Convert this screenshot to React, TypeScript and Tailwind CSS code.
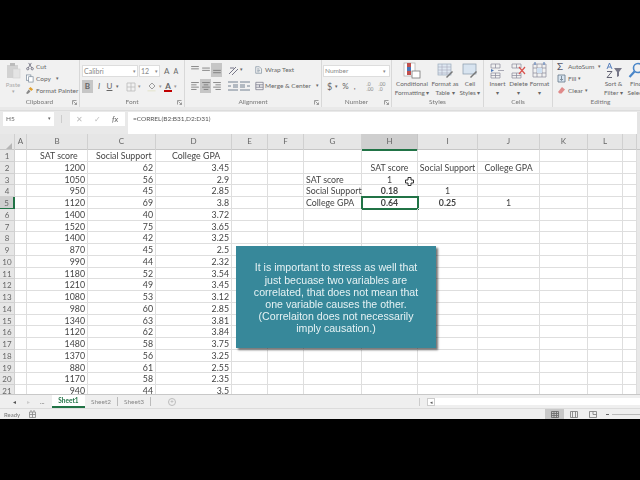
import type { ReactNode } from "react";

const rows = [
  ["SAT score", "Social Support", "College GPA"],
  ["1200", "62", "3.45"],
  ["1050", "56", "2.9"],
  ["950", "45", "2.85"],
  ["1120", "69", "3.8"],
  ["1400", "40", "3.72"],
  ["1520", "75", "3.65"],
  ["1400", "42", "3.25"],
  ["870", "45", "2.5"],
  ["990", "44", "2.32"],
  ["1180", "52", "3.54"],
  ["1210", "49", "3.45"],
  ["1080", "53", "3.12"],
  ["980", "60", "2.85"],
  ["1340", "63", "3.81"],
  ["1120", "62", "3.84"],
  ["1480", "58", "3.75"],
  ["1370", "56", "3.25"],
  ["880", "61", "2.55"],
  ["1170", "58", "2.35"],
  ["940", "44", "3.5"],
];

const columns = ["A", "B", "C", "D", "E", "F", "G", "H", "I", "J", "K", "L", ""];

// second table, keyed by row index then column letter
const corr: Record<number, Record<string, string>> = {
  1: { H: "SAT score", I: "Social Support", J: "College GPA" },
  2: { G: "SAT score", H: "1" },
  3: { G: "Social Support", H: "0.18", I: "1" },
  4: { G: "College GPA", H: "0.64", I: "0.25", J: "1" },
};

const Lines = ({ kind }: { kind: "left" | "center" | "right" | "top" | "middle" | "bottom" }) => {
  const d = {
    left: "M1 2h10M1 5h7M1 8h10M1 11h7",
    center: "M1 2h10M3 5h6M1 8h10M3 11h6",
    right: "M1 2h10M4 5h7M1 8h10M4 11h7",
    top: "M1 2h10M1 5h10",
    middle: "M1 4h10M1 7h10",
    bottom: "M1 7h10M1 10h10",
  }[kind];
  return (
    <svg width="10" height="10" viewBox="0 0 12 13" fill="none" stroke="#777" strokeWidth="1.1">
      <path d={d} />
    </svg>
  );
};

const Group = ({ width, label, launcher, children }: { width: string; label: string; launcher?: boolean; children: ReactNode }) => {
  return (
    <div className={`${width} shrink-0 h-full flex flex-col border-r border-[#d8d8d8]`}>
      <div className="flex-1 min-h-0">{children}</div>
      <div className="h-[10px] relative text-center text-[6.5px] leading-[10px] text-[#777]">
        {label}
        {launcher && (
          <svg className="absolute right-[2px] top-[3px]" width="5" height="5" viewBox="0 0 5 5" fill="none" stroke="#888" strokeWidth="0.8">
            <path d="M0.5 4.5v-4h4M1.5 1.5l3 3M4.5 2.5v2h-2" />
          </svg>
        )}
      </div>
    </div>
  );
};

const BigButton = ({ width, lines, children }: { width: string; lines: string[]; children: ReactNode }) => {
  return (
    <div className={`${width} shrink-0 flex flex-col items-center`}>
      <div className="h-[17px] flex items-center justify-center">{children}</div>
      <div className="text-center text-[6.3px] leading-[9px] text-[#666] whitespace-nowrap">
        {lines.map((l) => (
          <div key={l}>{l}</div>
        ))}
      </div>
    </div>
  );
};

const Ribbon = () => {
  return (
    <div className="h-[47px] flex bg-[#f1f1f1] font-['Lato',sans-serif] overflow-hidden">
      <Group width="w-[80px]" label="Clipboard" launcher>
        <div className="flex h-full pt-[2px]">
          <div className="w-[26px] flex flex-col items-center">
            <svg width="15" height="17" viewBox="0 0 15 17">
              <rect x="1" y="3" width="11" height="13" fill="#d2d2d2" />
              <rect x="4" y="1" width="5" height="3" fill="#bbb" />
              <rect x="7" y="7" width="7" height="9" fill="#e4e4e4" stroke="#ccc" strokeWidth="0.5" />
            </svg>
            <span className="text-[6px] leading-[7px] text-[#aaa] mt-[2px]">Paste</span>
            <span className="text-[5px] leading-[7px] text-[#aaa]">▾</span>
          </div>
          <div className="flex flex-col gap-[3px] text-[6.5px] leading-[9px] text-[#666] whitespace-nowrap">
            <div className="flex items-center gap-[2px]">
              <svg width="8" height="9" viewBox="0 0 9 9" fill="none" stroke="#667" strokeWidth="0.9">
                <circle cx="2" cy="7" r="1.3" />
                <circle cx="7" cy="7" r="1.3" />
                <path d="M2.6 6L6 0.5M6.4 6L3 0.5" />
              </svg>
              Cut
            </div>
            <div className="flex items-center gap-[2px]">
              <svg width="8" height="9" viewBox="0 0 9 9" fill="#fff" stroke="#7a8a9a" strokeWidth="0.8">
                <rect x="0.5" y="0.5" width="5" height="6" />
                <rect x="3" y="2.5" width="5" height="6" />
              </svg>
              Copy <span className="ml-[3px] text-[5px]">▾</span>
            </div>
            <div className="flex items-center gap-[2px]">
              <svg width="8" height="9" viewBox="0 0 9 9">
                <path d="M5 0.5l3 2.5-2 2-3-2.5z" fill="#e0a030" />
                <path d="M3 3.5l2 2-3 3-2-1z" fill="#888" />
              </svg>
              <span>Format Painter</span>
            </div>
          </div>
        </div>
      </Group>

      <Group width="w-[105px]" label="Font" launcher>
        <div className="pt-[5px] pl-[2px] flex flex-col gap-[3px] text-[#666]">
          <div className="flex items-center gap-[1px] text-[7px]">
            <div className="w-[56px] h-[12px] bg-white border border-[#ddd] px-[1px] leading-[10px] flex justify-between text-[#888]">
              Calibri<span className="text-[5px]">▾</span>
            </div>
            <div className="w-[21px] h-[12px] bg-white border border-[#ddd] px-[1px] leading-[10px] flex justify-between text-[#888]">
              12<span className="text-[5px]">▾</span>
            </div>
            <span className="ml-[3px] text-[8px]">A</span>
            <span className="ml-[3px] text-[7px]">A</span>
          </div>
          <div className="flex items-center text-[8px] leading-[13px]">
            <span className="w-[11px] h-[13px] bg-[#c6c6c6] text-center font-bold">B</span>
            <span className="ml-[2px] w-[8px] text-center italic">I</span>
            <span className="ml-[3px] w-[7px] text-center underline">U</span>
            <span className="ml-[3px] text-[5px]">▾</span>
            <svg width="10" height="10" viewBox="0 0 10 10" fill="none" stroke="#bbb" strokeWidth="0.8" className="ml-[7px]">
              <path d="M1 1h8v8H1zM5 1v8M1 5h8" />
            </svg>
            <span className="ml-[2px] text-[5px] text-[#999]">▾</span>
            <svg width="10" height="11" viewBox="0 0 10 11" className="ml-[6px]">
              <path d="M2 5l3-3 3 3-3 3z" fill="none" stroke="#888" strokeWidth="0.8" />
              <rect x="0.5" y="9" width="8" height="1.5" fill="#e8e8d8" />
            </svg>
            <span className="ml-[2px] text-[5px] text-[#999]">▾</span>
            <div className="flex flex-col items-center w-[8px] ml-[2px]">
              <span className="text-[8px] leading-[8px] font-bold">A</span>
              <span className="w-[8px] h-[2px] bg-[#c00000]" />
            </div>
            <span className="ml-[2px] text-[5px] text-[#999]">▾</span>
          </div>
        </div>
      </Group>

      <Group width="w-[137px]" label="Alignment" launcher>
        <div className="pt-[3px] pl-[4px] flex flex-col gap-[2px] text-[6.5px] text-[#666] whitespace-nowrap">
          <div className="flex items-center h-[14px]">
            <span className="w-[11px] h-[14px] flex items-center justify-center"><Lines kind="top" /></span>
            <span className="w-[11px] h-[14px] flex items-center justify-center"><Lines kind="middle" /></span>
            <span className="w-[11px] h-[14px] flex items-center justify-center bg-[#c6c6c6]"><Lines kind="bottom" /></span>
            <svg width="11" height="11" viewBox="0 0 11 11" fill="none" stroke="#778" strokeWidth="1" className="ml-[6px]">
              <path d="M1 9L8 2M4 10l6-6M2 3h4" />
            </svg>
            <span className="text-[5px] ml-[1px] w-[3px]">▾</span>
            <svg width="8" height="10" viewBox="0 0 11 11" fill="none" stroke="#789" strokeWidth="0.9" className="ml-[12px] mr-[2px]">
              <path d="M1 1h5l3 3v6H1zM3 4h3M3 6h4M3 8h3" />
            </svg>
            Wrap Text
          </div>
          <div className="flex items-center h-[14px]">
            <span className="w-[11px] flex justify-center"><Lines kind="left" /></span>
            <span className="w-[11px] h-[14px] flex items-center justify-center bg-[#c6c6c6]"><Lines kind="center" /></span>
            <span className="w-[11px] flex justify-center"><Lines kind="right" /></span>
            <svg width="10" height="10" viewBox="0 0 10 10" fill="none" stroke="#678" strokeWidth="0.9" className="ml-[6px]">
              <path d="M0 1h10M5 4h5M5 6h5M0 9h10M0 5h3" />
            </svg>
            <svg width="10" height="10" viewBox="0 0 10 10" fill="none" stroke="#678" strokeWidth="0.9" className="ml-[2px]">
              <path d="M0 1h10M0 4h5M0 6h5M0 9h10M7 5h3" />
            </svg>
            <svg width="9" height="10" viewBox="0 0 11 11" fill="none" stroke="#778" strokeWidth="0.9" className="ml-[5px] mr-[1px]">
              <path d="M1 1h9v9H1zM1 4h9M1 7h9M5.5 4v3" />
            </svg>
            Merge &amp; Center
            <span className="text-[5px] ml-[5px]">▾</span>
          </div>
        </div>
      </Group>

      <Group width="w-[70px]" label="Number" launcher>
        <div className="pt-[5px] pl-[1px] flex flex-col gap-[3px] text-[#666]">
          <div className="w-[67px] h-[12px] bg-white border border-[#ddd] px-[1px] leading-[10px] flex justify-between text-[6.5px] text-[#888]">
            Number<span className="text-[5px] mr-[2px]">▾</span>
          </div>
          <div className="flex items-center text-[9px] leading-[13px] pl-[4px]">
            $<span className="text-[5px] ml-[3px]">▾</span>
            <span className="ml-[4px] text-[8px]">%</span>
            <span className="ml-[5px] text-[8px]">,</span>
            <span className="ml-[11px] text-[5px] leading-[5px] w-[9px] text-[#888]">.0<br />.00</span>
            <span className="ml-[3px] text-[5px] leading-[5px] w-[9px] text-[#888]">.00<br />.0</span>
          </div>
        </div>
      </Group>

      <Group width="w-[92px]" label="Styles">
        <div className="flex pt-[2px] h-full">
          <BigButton width="w-[40px]" lines={["Conditional", "Formatting ▾"]}>
            <svg width="18" height="17" viewBox="0 0 18 17">
              <rect x="1" y="1" width="11" height="13" fill="#fff" stroke="#aaa" strokeWidth="0.7" />
              <rect x="4" y="1" width="4" height="4" fill="#c0504d" />
              <rect x="4" y="5" width="4" height="4" fill="#4a76b8" />
              <rect x="4" y="9" width="4" height="4" fill="#c0504d" />
              <rect x="9" y="9" width="8" height="7" fill="#fff" stroke="#777" strokeWidth="0.8" />
            </svg>
          </BigButton>
          <BigButton width="w-[26px]" lines={["Format as", "Table ▾"]}>
            <svg width="17" height="16" viewBox="0 0 17 16">
              <rect x="1" y="1" width="13" height="11" fill="#dfe8f2" stroke="#9ab" strokeWidth="0.7" />
              <path d="M1 4h13M1 7h13M1 10h13M5 1v11M10 1v11" stroke="#aab" strokeWidth="0.6" />
              <path d="M9 14l6-6 1 1-6 6z" fill="#777" />
            </svg>
          </BigButton>
          <BigButton width="w-[24px]" lines={["Cell", "Styles ▾"]}>
            <svg width="16" height="16" viewBox="0 0 16 16">
              <rect x="1" y="1" width="13" height="10" fill="#d8e4f0" stroke="#89a" strokeWidth="0.7" />
              <path d="M8 14l6-6 1 1-6 6z" fill="#777" />
            </svg>
          </BigButton>
        </div>
      </Group>

      <Group width="w-[69px]" label="Cells">
        <div className="flex pt-[2px] pl-[3px] h-full">
          <BigButton width="w-[21px]" lines={["Insert", "▾"]}>
            <svg width="15" height="16" viewBox="0 0 15 16" fill="none" stroke="#889" strokeWidth="0.7">
              <path d="M1 1h9v4H1zM1 10h9v5H1zM5.5 1v4M5.5 10v5M1 12.5h9M8 7.5h6" />
              <path d="M1 6l3 1.5-3 1.5z" fill="#4a76b8" stroke="none" />
            </svg>
          </BigButton>
          <BigButton width="w-[21px]" lines={["Delete", "▾"]}>
            <svg width="16" height="16" viewBox="0 0 16 16" fill="none" stroke="#889" strokeWidth="0.7">
              <path d="M1 1h9v4H1zM1 10h9v5H1zM5.5 1v4M5.5 10v5M1 12.5h9" />
              <path d="M8 4l6 7M14 4l-6 7" stroke="#d9534f" strokeWidth="1.2" />
            </svg>
          </BigButton>
          <BigButton width="w-[21px]" lines={["Format", "▾"]}>
            <svg width="15" height="17" viewBox="0 0 15 17" fill="none" stroke="#889" strokeWidth="0.7">
              <path d="M1 2h13v13H1zM5 2v13M10 2v13M1 6h13M1 11h13" />
              <path d="M3 0v3M12 0v3" stroke="#4a76b8" strokeWidth="1" />
              <rect x="5" y="6" width="5" height="5" fill="#cfe0f2" stroke="none" />
            </svg>
          </BigButton>
        </div>
      </Group>

      <div className="flex-1 h-full flex flex-col min-w-0">
        <div className="flex-1 min-h-0 flex pt-[2px]">
          <div className="w-[50px] shrink-0 pl-[4px] flex flex-col gap-[3px] text-[6.5px] leading-[9px] text-[#666] whitespace-nowrap">
            <div className="flex items-center gap-[2px]"><span className="w-[9px] text-[10px] leading-[9px] text-[#556]">Σ</span>AutoSum<span className="text-[5px] ml-[2px]">▾</span></div>
            <div className="flex items-center gap-[2px]">
              <svg width="9" height="9" viewBox="0 0 9 9" fill="#d8e4f0" stroke="#678" strokeWidth="0.8">
                <path d="M1 1h7v7H1zM4.5 2v4M3 5l1.5 1.5L6 5" />
              </svg>
              Fill<span className="text-[5px]">▾</span>
            </div>
            <div className="flex items-center gap-[2px]">
              <svg width="9" height="9" viewBox="0 0 9 9">
                <path d="M1 6l4-5 3 2.5-3.5 4H2.5z" fill="#e08a8a" />
              </svg>
              Clear<span className="text-[5px]">▾</span>
            </div>
          </div>
          <BigButton width="w-[21px]" lines={["Sort &", "Filter ▾"]}>
            <svg width="16" height="17" viewBox="0 0 16 17">
              <path d="M1 7l2.5-6L6 7M2 5h3" fill="none" stroke="#4a76b8" strokeWidth="0.9" />
              <path d="M1 9.5h5L1 15.5h5" fill="none" stroke="#556" strokeWidth="0.9" />
              <path d="M8 6h8l-3 4v4l-2 1v-5z" fill="#778" />
            </svg>
          </BigButton>
          <div className="ml-[2px]">
            <BigButton width="w-[20px]" lines={["Find", "Select"]}>
              <svg width="16" height="17" viewBox="0 0 16 17" fill="none" stroke="#4a86c8" strokeWidth="1.6">
                <circle cx="10" cy="6" r="4.5" />
                <path d="M6.5 9.5L1.5 15" strokeWidth="2.2" />
              </svg>
            </BigButton>
          </div>
        </div>
        <div className="h-[10px] text-center text-[6.5px] leading-[10px] text-[#777] pl-[8px]">Editing</div>
      </div>
    </div>
  );
};

const FormulaBar = () => {
  return (
    <div className="h-[24px] bg-[#e9e9e9] pt-[1px] flex items-start font-['Lato',sans-serif] border-t border-[#dcdcdc]">
      <div className="ml-[3px] w-[51px] h-[14px] bg-white flex items-center justify-between px-[3px] text-[6.5px] text-[#666]">
        H5<span className="text-[5px]">▾</span>
      </div>
      <div className="ml-[7px] w-[1px] h-[8px] mt-[3px] bg-[#ccc]" />
      <div className="ml-[8px] w-[55px] h-[14px] bg-white flex items-center gap-[11px] pl-[6px] text-[8px] text-[#bbb]">
        <span>✕</span>
        <span>✓</span>
        <span className="italic text-[#666]">fx</span>
      </div>
      <div className="ml-[3px] flex-1 h-[22px] bg-white pl-[5px] pt-[1px] text-[6.5px] leading-[12px] text-[#555]">=CORREL(B2:B31,D2:D31)</div>
      <div className="w-[3px] h-[22px] bg-[#e4e4e4]" />
    </div>
  );
};

const Sheet = () => {
  return (
    <div className="relative h-[260px] overflow-hidden bg-white font-['Lato',sans-serif]">
      <div className="h-[16px] grid grid-cols-[15px_12px_61px_68px_76px_36px_36px_58px_56px_60px_62px_48px_35px_14px_3px] bg-[#e6e6e6] border-b border-[#c6c6c6] text-[8px] leading-[15px] text-[#666]">
        <div className="flex items-end justify-end border-r border-[#d0d0d0] pr-[2px] pb-[2px]">
          <div className="w-0 h-0 border-l-[6px] border-l-transparent border-b-[6px] border-b-[#b5b5b5]" />
        </div>
        {columns.map((c) => (
          <div key={c} className={c === "H" ? "text-center bg-[#cfcfcf] border-b-2 border-[#217346] border-r border-r-[#c6c6c6]" : "text-center border-r border-[#d0d0d0]"}>
            {c}
          </div>
        ))}
        <div />
      </div>
      <div className="grid grid-cols-[15px_12px_61px_68px_76px_36px_36px_58px_56px_60px_62px_48px_35px_14px_3px] auto-rows-[11.75px] text-[8.8px] leading-[12px] text-[#444]">
        {rows.map((row, i) => {
          const extra = corr[i] ?? {};
          const cell = "border-b border-r border-[#dedede] whitespace-nowrap overflow-visible";
          return (
            <div key={i} className="contents">
              <div className={i === 4 ? "bg-[#cfcfcf] border-r-2 border-[#217346] border-b text-center text-[8px] text-[#666]" : "bg-[#e6e6e6] border-r border-b border-[#d0d0d0] text-center text-[8px] text-[#666]"}>
                {i + 1}
              </div>
              <div className={cell} />
              {i === 0 ? (
                <>
                  <div className={`${cell} pl-[13px]`}>{row[0]}</div>
                  <div className={`${cell} pl-[8px]`}>{row[1]}</div>
                  <div className={`${cell} pl-[16px]`}>{row[2]}</div>
                </>
              ) : (
                <>
                  <div className={`${cell} text-right pr-[2px]`}>{row[0]}</div>
                  <div className={`${cell} text-right pr-[2px]`}>{row[1]}</div>
                  <div className={`${cell} text-right pr-[2px]`}>{row[2]}</div>
                </>
              )}
              <div className={cell} />
              <div className={cell} />
              <div className={`${cell} pl-[2px]`}>{extra.G}</div>
              <div className={`${cell} text-center ${i > 2 ? "font-bold" : ""} ${i === 4 ? "outline-2 -outline-offset-1 outline-[#217346]" : ""}`}>{extra.H}</div>
              <div className={`${cell} text-center ${i === 4 ? "font-bold" : ""}`}>{extra.I}</div>
              <div className={`${cell} text-center`}>{extra.J}</div>
              <div className={cell} />
              <div className={cell} />
              <div className={cell} />
              <div className="bg-[#e8e8e8]" />
            </div>
          );
        })}
      </div>

      {/* excel cross cursor */}
      <svg className="absolute left-[405px] top-[43px]" width="9" height="9" viewBox="0 0 9 9" fill="#fff" stroke="#333" strokeWidth="1">
        <path d="M3 0.5h3v2.5h2.5v3H6v2.5H3V6H0.5V3H3z" />
      </svg>

      {/* callout over the sheet */}
      <div className="absolute left-[236px] top-[112px] w-[200px] h-[102px] pt-[2px] bg-[#37889a] shadow-[2px_2px_2px_rgba(0,0,0,0.55)] flex items-center justify-center text-center font-['Liberation_Sans',sans-serif] text-[10.6px] leading-[12.2px] text-[#e6f2f4]">
        <p>
          It is important to stress as well that
          <br />
          just becuase two variables are
          <br />
          correlated, that does not mean that
          <br />
          one variable causes the other.
          <br />
          (Correlaiton does not necessarily
          <br />
          imply causation.)
        </p>
      </div>
    </div>
  );
};

const TabBar = () => {
  return (
    <div className="h-[14px] flex items-center bg-[#efefef] border-t border-[#c8c8c8] font-['Lato',sans-serif] text-[6.5px] text-[#888]">
      <span className="ml-[13px] text-[6px] text-[#555]">◂</span>
      <span className="ml-[11px] text-[6px] text-[#ccc]">▸</span>
      <span className="ml-[10px] w-[9px] text-[#555]">...</span>
      <div className="ml-[3px] w-[33px] h-full bg-white border-b-2 border-[#217346] text-center font-bold text-[#217346] leading-[12px]">Sheet1</div>
      <div className="w-[33px] text-center border-r border-[#bbb]">Sheet2</div>
      <div className="w-[33px] text-center border-r border-[#bbb]">Sheet3</div>
      <div className="ml-[17px] w-[8px] h-[8px] rounded-full border border-[#bbb] text-[6px] leading-[6px] text-center text-[#aaa]">+</div>
      <div className="ml-[243px] w-[1px] h-[8px] bg-[#ccc]" />
      <div className="ml-[7px] w-[8px] h-[8px] bg-white border border-[#ccc] text-[5px] leading-[6px] text-center text-[#555]">◂</div>
      <div className="flex-1 h-[7px] bg-white" />
    </div>
  );
};

const StatusBar = () => {
  return (
    <div className="h-[11px] flex items-center bg-[#efefef] border-t border-[#dcdcdc] font-['Lato',sans-serif] text-[6px] text-[#777]">
      <span className="ml-[4px]">Ready</span>
      <svg className="ml-[9px]" width="7" height="8" viewBox="0 0 7 8" fill="none" stroke="#888" strokeWidth="0.8">
        <path d="M0.5 2h6v5.5h-6zM0.5 4.5h6M3.5 2v5.5M2 0v2M5 0v2" />
      </svg>
      <div className="ml-auto w-[19px] h-full bg-[#c8c8c8] flex items-center justify-center">
        <svg width="8" height="7" viewBox="0 0 8 7" fill="none" stroke="#666" strokeWidth="0.8">
          <path d="M0.5 0.5h7v6h-7zM0.5 2.5h7M0.5 4.5h7M3 0.5v6M5.5 0.5v6" />
        </svg>
      </div>
      <div className="w-[19px] flex justify-center">
        <svg width="8" height="7" viewBox="0 0 8 7" fill="none" stroke="#777" strokeWidth="0.8">
          <path d="M0.5 0.5h7v6h-7zM2.5 0.5v6M5.5 0.5v6" />
        </svg>
      </div>
      <div className="w-[20px] flex justify-center">
        <svg width="8" height="7" viewBox="0 0 8 7" fill="none" stroke="#777" strokeWidth="0.8">
          <path d="M0.5 0.5h7v6h-7zM4 0.5v3M4 3.5h3.5" />
        </svg>
      </div>
      <span className="ml-[3px] w-[3px] h-[1px] bg-[#666]" />
      <span className="ml-[3px] w-[28px] h-[1px] bg-[#bbb]" />
    </div>
  );
};

export default function App() {
  return (
    <div className="w-[640px] h-[480px] bg-black flex flex-col overflow-hidden">
      <div className="h-[60px] shrink-0" />
      <div className="blur-[0.3px]">
        <Ribbon />
        <div className="h-[3px] bg-[#e9e9e9]" />
        <FormulaBar />
        <Sheet />
        <TabBar />
        <StatusBar />
      </div>
      <div className="flex-1" />
    </div>
  );
}
